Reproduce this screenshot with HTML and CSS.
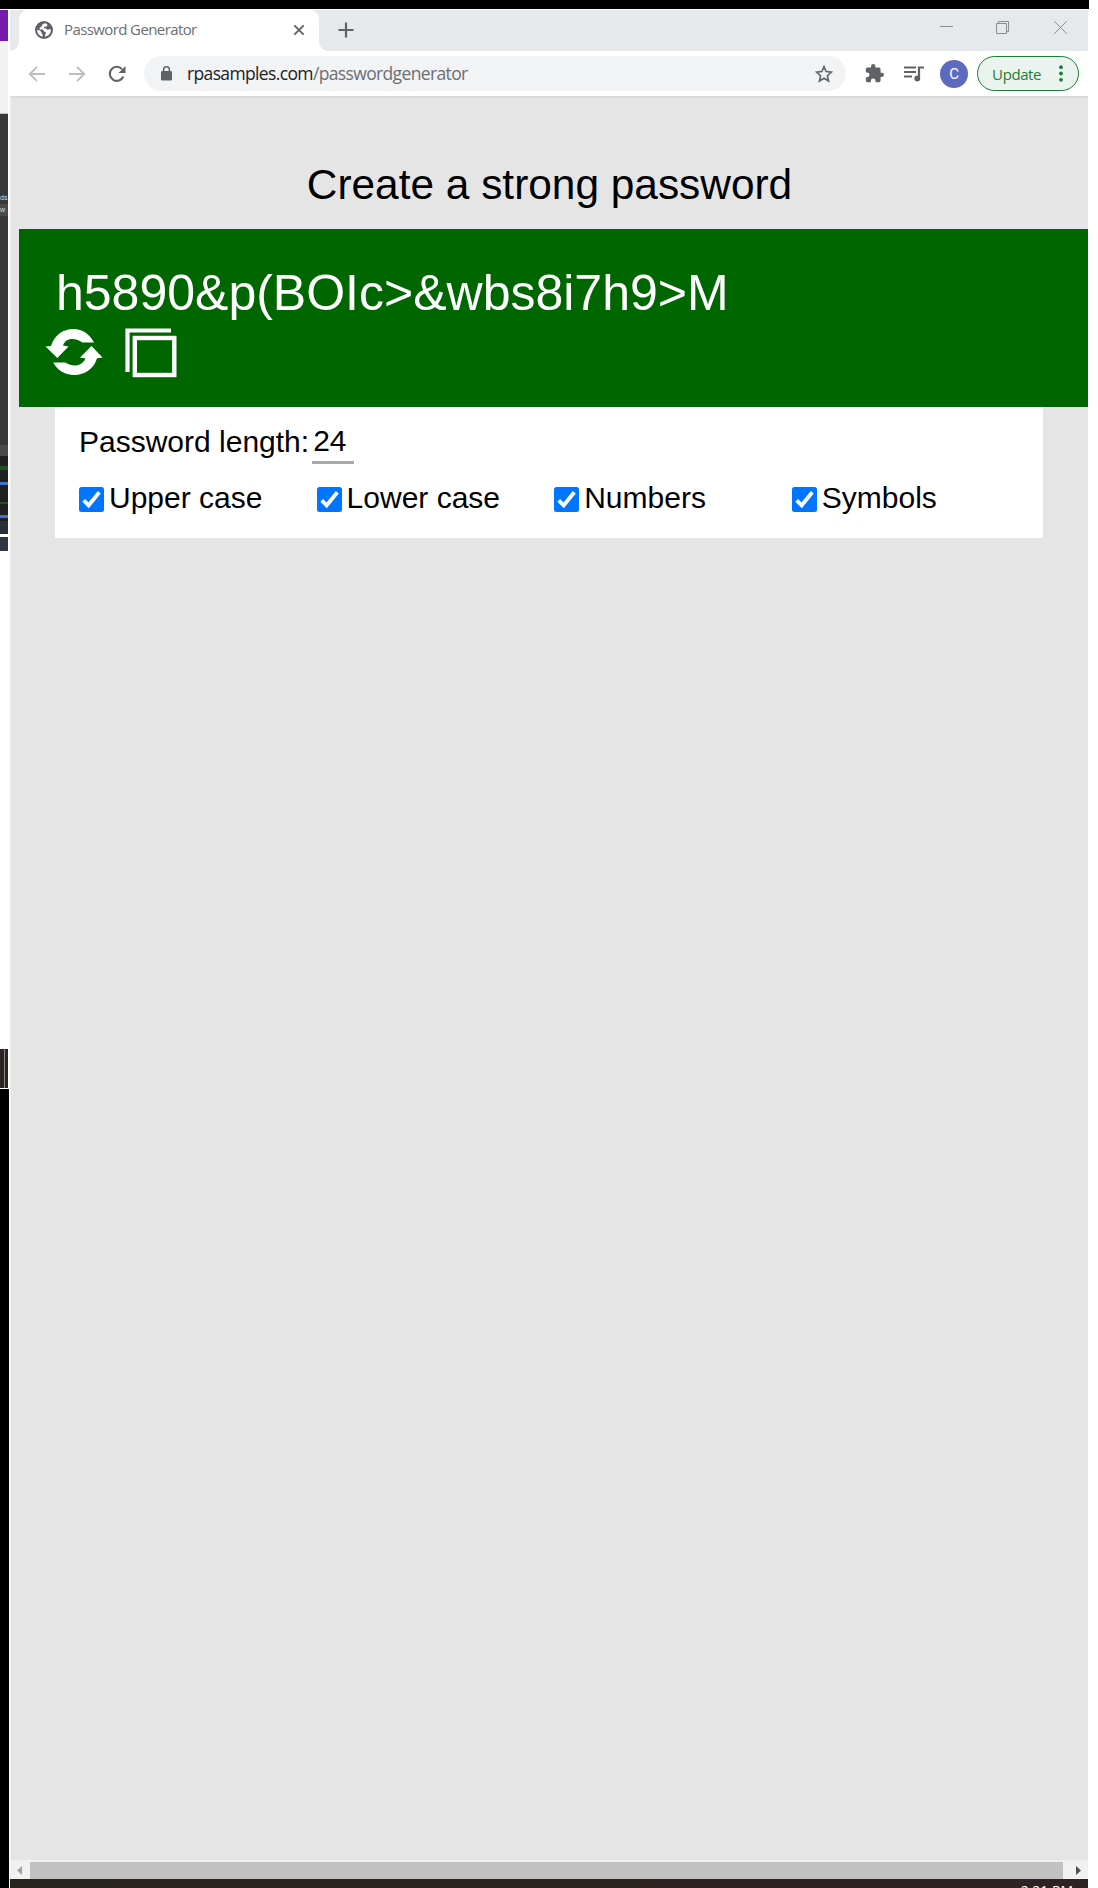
FILE: index.html
```html
<!DOCTYPE html>
<html lang="en">
<head>
<meta charset="utf-8">
<title>Password Generator</title>
<link rel="stylesheet" href="styles.css">
</head>
<body>
<div class="top-edge"></div>
<div class="desktop">
  <div class="behind">
    <div class="b-purple"></div>
    <div class="b-ribbon"></div>
    <div class="b-dark"></div>
    <div class="b-text">ds</div>
    <div class="b-row">w</div>
    <div class="b-dark2"></div>
    <div class="b-head"></div>
    <div class="b-tracks"></div>
    <div class="b-slate"></div>
    <div class="b-slate2"></div>
    <div class="b-white"></div>
    <div class="b-task"></div>
    <div class="b-black"></div>
  </div>
  <div class="window">
    <div class="tabstrip">
      <div class="strip-start"></div>
      <div class="tab">
        <svg class="globe" width="18" height="18" viewBox="0 0 18 18"><circle cx="9" cy="9" r="9" fill="#5f6368"/><path d="M10.5 2.2c-1.300.2-2.300.6-3.400 1.500 0 1-.2 1.800-1.200 2.200-.9.400-1.500 1-1.300 2 .2.700.9.800 1.800.7 1.200 0 2.400.2 2.600 1.400.2.900.9 1.100 1.900 1.200-.1 1.700-1 2.600-1 4.500 3.500-.5 6-3.400 6-6.900-.8-.6-1.400-.6-2.300-.2-.8.400-1.500.400-1.900-.4-.4-.8-1.200-1-2.100-.8-.7.100-.9-.5-.5-1.100.5-.6 1.300-.6 2.100-.7.900-.2 1.200-1 1.100-1.900-.1-.6-.6-1.200-1.800-1.500z" fill="#fff"/><path d="M2.300 8.700c1.700.3 3.300 1.200 4 2.300.6 1 .2 1.900 1.200 2.500.4.300.3 1.400-.2 2.100C4.300 14.900 2 12.300 2.300 8.700z" fill="#fff"/></svg>
        <span class="tab-title">Password Generator</span>
        <svg class="tab-close" width="12" height="12" viewBox="0 0 12 12"><path d="M1.300 1.300l9.400 9.400M10.700 1.300l-9.400 9.400" stroke="#5f6368" stroke-width="1.900"/></svg>
      </div>
      <div class="strip-rest">
        <svg width="16" height="16" viewBox="0 0 16 16"><path d="M8 .5v15M.5 8h15" stroke="#5f6368" stroke-width="2.200"/></svg>
        <div class="controls">
          <svg width="13" height="13" viewBox="0 0 13 13"><path d="M0 5.500h13" stroke="#8b8e90"/></svg>
          <svg width="13" height="13" viewBox="0 0 13 13"><path d="M.5 2.500h10v10H.5zM2.500 2.500v-2h10v10h-2" fill="none" stroke="#8b8e90"/></svg>
          <svg width="13" height="13" viewBox="0 0 13 13"><path d="M.3.3l12.400 12.400M12.700.3L.3 12.700" stroke="#8b8e90"/></svg>
        </div>
      </div>
    </div>
    <div class="toolbar">
      <svg class="nav" width="18" height="16" viewBox="0 0 18 16"><path d="M17 8H2M9 .8L1.800 8 9 15.200" fill="none" stroke="#bbbdbf" stroke-width="1.900"/></svg>
      <svg class="nav" width="18" height="16" viewBox="0 0 18 16"><path d="M1 8h15M9 .8L16.200 8 9 15.200" fill="none" stroke="#bbbdbf" stroke-width="1.900"/></svg>
      <svg class="nav" width="18" height="18" viewBox="0 0 18 18"><path d="M15.300 11.500A7 7 0 1 1 14 4.100" fill="none" stroke="#5f6368" stroke-width="2.100"/><path d="M17.500 1v7h-7z" fill="#5f6368"/></svg>
      <div class="omnibox">
        <svg class="lock" width="11" height="15" viewBox="0 0 11 15"><rect y="5" width="11" height="9.500" rx="1.200" fill="#5f6368"/><path d="M2.600 6V3.700a2.900 2.900 0 0 1 5.800 0V6" fill="none" stroke="#5f6368" stroke-width="1.500"/></svg>
        <span class="url"><span class="host">rpasamples.com</span>/passwordgenerator</span>
        <svg class="star" width="18" height="18" viewBox="0 0 18 18"><path d="M9 1.600l2.100 5 5.400.5-4.100 3.600 1.200 5.300L9 13.200 4.400 16l1.200-5.300-4.100-3.600 5.400-.5z" fill="none" stroke="#5f6368" stroke-width="1.600"/></svg>
      </div>
      <svg class="puzzle" width="19" height="19" viewBox="1 1 22 22"><path d="M20.500 11H19V7c0-1.100-.9-2-2-2h-4V3.500a2.500 2.500 0 0 0-5 0V5H4c-1.100 0-2 .9-2 2v3.800h1.500a2.700 2.700 0 0 1 0 5.400H2V20c0 1.100.9 2 2 2h3.800v-1.500a2.700 2.700 0 0 1 5.400 0V22H17c1.100 0 2-.9 2-2v-4h1.500a2.500 2.500 0 0 0 0-5z" fill="#5f6368"/></svg>
      <svg class="media" width="20" height="16" viewBox="0 0 20 16"><path d="M0 1.500h12M0 6h12M0 10.500h8" stroke="#5f6368" stroke-width="2"/><path d="M15 12.500V1.500h5" fill="none" stroke="#5f6368" stroke-width="2.200"/><circle cx="13.300" cy="12.500" r="2.900" fill="#5f6368"/></svg>
      <div class="avatar">C</div>
      <div class="update"><span>Update</span><svg width="4" height="17" viewBox="0 0 4 17"><g fill="#188038"><circle cx="2" cy="2.200" r="1.900"/><circle cx="2" cy="8.500" r="1.900"/><circle cx="2" cy="14.800" r="1.900"/></g></svg></div>
    </div>
    <main class="page">
      <h1>Create a strong password</h1>
      <section class="result">
        <div class="password">h5890&amp;p(BOIc&gt;&amp;wbs8i7h9&gt;M</div>
        <div class="actions">
          <svg width="58" height="48" viewBox="0 0 58 48"><g fill="#fff"><path d="M.5 18.500l5.500-.6C9.500 7.500 17.500 1 28.500 1 37.500 1 44.500 6 49 14.500H37.500C29 9 20.500 10 18 17.500l5.500 1L12.300 30z"/><path d="M57.500 29.500l-5.500.7C49 40.500 40 47 29.300 47 19.500 47 12 42 8.300 34.500h12C28 39.500 37 38.500 40.500 30.500l-5.500-1L46.500 18z"/></g></svg>
          <svg width="52" height="50" viewBox="0 0 52 50"><path d="M46 2.500H2.500V44" fill="none" stroke="#fff" stroke-width="4.200"/><rect x="9.800" y="10" width="39.500" height="37" fill="none" stroke="#fff" stroke-width="4.400"/></svg>
        </div>
      </section>
      <section class="options">
        <div class="length"><span>Password length:</span><span class="value">24</span></div>
        <div class="checks">
          <div class="check"><svg width="25" height="25" viewBox="0 0 25 25"><rect width="25" height="25" rx="2.500" fill="#0075ff"/><path d="M4.700 13.300l5 5L20.300 5.300" fill="none" stroke="#fff" stroke-width="3.800"/></svg>Upper case</div>
          <div class="check"><svg width="25" height="25" viewBox="0 0 25 25"><rect width="25" height="25" rx="2.500" fill="#0075ff"/><path d="M4.700 13.300l5 5L20.300 5.300" fill="none" stroke="#fff" stroke-width="3.800"/></svg>Lower case</div>
          <div class="check"><svg width="25" height="25" viewBox="0 0 25 25"><rect width="25" height="25" rx="2.500" fill="#0075ff"/><path d="M4.700 13.300l5 5L20.300 5.300" fill="none" stroke="#fff" stroke-width="3.800"/></svg>Numbers</div>
          <div class="check"><svg width="25" height="25" viewBox="0 0 25 25"><rect width="25" height="25" rx="2.500" fill="#0075ff"/><path d="M4.700 13.300l5 5L20.300 5.300" fill="none" stroke="#fff" stroke-width="3.800"/></svg>Symbols</div>
        </div>
      </section>
    </main>
    <div class="scrollbar">
      <svg width="20" height="19" viewBox="0 0 20 19"><path d="M7 10.500L12 6v9z" fill="#a3a3a3"/></svg>
      <div class="thumb"></div>
      <svg width="25" height="19" viewBox="0 0 25 19"><path d="M18 10.500L13 6v9z" fill="#505050"/></svg>
    </div>
    <div class="taskbar"><span>2:21 PM</span></div>
  </div>
</div>
</body>
</html>
```
FILE: styles.css
```css
* { box-sizing: border-box; }
body {
  margin: 0;
  width: 1098px;
  height: 1888px;
  overflow: hidden;
  background: #fff;
  font-family: "Liberation Sans", Arial, sans-serif;
}
svg { display: block; flex: none; }
.top-edge { width: 1089px; height: 9px; background: #000; }
.desktop { display: flex; padding-top: 1px; height: 1879px; }

/* sliver of the windows lying behind the browser */
.behind { width: 10px; display: flex; flex-direction: column; flex: none; }
.behind > div { width: 8px; flex: none; overflow: hidden; font-size: 7px; color: #ddd; }
.b-purple { height: 31px; background: #7719aa; }
.b-ribbon { height: 73px; background: #f3f2f1; border-bottom: 1px solid #c0c0c0; }
.b-dark { height: 80px; background: #393939; }
.b-text { height: 10px; line-height: 8px; background: #393939; }
.b-row { height: 12px; line-height: 11px; background: #4a4a4a; }
.b-dark2 { height: 229px; background: #393939; }
.b-head { height: 11px; background: #4a4a4a; }
.b-tracks {
  height: 65px;
  background: linear-gradient(#202020 0 10px, #205226 10px 14px, #202020 14px 26px, #3b78cf 26px 29px, #202020 29px 46px, #205226 46px 48px, #202020 48px 59px, #3e70dd 59px 62px, #202020 62px);
}
.b-slate { height: 13px; background: #28303a; }
.b-slate2 { height: 17px; background: #2f3842; border-top: 3px solid #fff; }
.b-white { height: 498px; }
.b-task { height: 39px; background: linear-gradient(90deg, #2c2222 4px, #8d8583 4px 5px, #2c2222 5px); }
.behind .b-black { width: 9px; height: 799px; margin-top: 1px; background: #000; }

.window { width: 1078px; display: flex; flex-direction: column; }

.tabstrip { height: 41px; display: flex; }
.strip-start { width: 9px; background: #e7eaed; border-bottom-right-radius: 9px; }
.tab {
  width: 300px;
  display: flex;
  align-items: center;
  padding: 0 14px 1px 16px;
  background: radial-gradient(circle at 10px 10px, #fff 10px, #e5e9ec 10.5px) 0 0 / 10px 10px no-repeat,
    radial-gradient(circle at 0 10px, #fff 10px, #e5e9ec 10.5px) 100% 0 / 10px 10px no-repeat, #fff;
}
.tab-title {
  margin-left: 11px;
  padding-bottom: 2px;
  flex: 1;
  font: 15px "Open Sans", "Noto Sans", sans-serif;
  letter-spacing: -0.6px;
  color: #6b6e72;
  white-space: nowrap;
}
.strip-rest {
  flex: 1;
  display: flex;
  align-items: center;
  justify-content: space-between;
  padding: 0 21px 1px 19px;
  background: #e5e9ec;
  border-bottom-left-radius: 9px;
}
.controls { display: flex; gap: 43px; padding-bottom: 5px; }
.controls svg:last-child { margin-left: 2px; }

.toolbar {
  height: 47px;
  display: flex;
  align-items: center;
  padding: 0 9px 0 18px;
  background: #fff;
  border-bottom: 2px solid #d9dbdf;
}
.nav { margin-right: 22px; }
.nav:nth-child(3) { margin-right: 18px; }
.omnibox {
  width: 703px;
  height: 35px;
  border-radius: 18px;
  background: #f1f3f4;
  display: flex;
  align-items: center;
  padding: 0 13px 0 17px;
}
.url {
  flex: 1;
  margin-left: 15px;
  padding-bottom: 1px;
  font: 17.500px "Open Sans", "Noto Sans", sans-serif;
  letter-spacing: -0.640px;
  color: #6b6e72;
}
.host { color: #202124; }
.puzzle { margin-left: 19px; }
.media { margin-left: 20px; }
.avatar {
  width: 28px;
  height: 28px;
  margin-left: 16px;
  border-radius: 50%;
  background: #5c6bc0;
  color: #fff;
  font: 15px/29px Roboto, sans-serif;
  text-align: center;
}
.update {
  width: 102px;
  height: 35px;
  margin-left: 9px;
  padding: 0 15px 0 14px;
  border: 1.500px solid #188038;
  border-radius: 18px;
  background: #ebf3ee;
  display: flex;
  align-items: center;
  justify-content: space-between;
  color: #188038;
  font: 15px "Open Sans", "Noto Sans", sans-serif;
  letter-spacing: -0.4px;
}

.page { height: 1762px; background: #e5e5e5; border-left: 1px solid #eee; }
h1 {
  margin: 0;
  height: 131px;
  padding-top: 63px;
  font-size: 42.400px;
  font-weight: 400;
  line-height: 48px;
  text-align: center;
  color: #000;
}
.result { height: 178px; margin-left: 8px; padding: 36px 0 0 26px; background: #060; }
.password { padding-left: 11px; color: #fff; font-size: 50px; line-height: 56px; white-space: nowrap; }
.actions { display: flex; gap: 22px; padding-top: 7px; }
.options { width: 988px; height: 131px; margin-left: 44px; padding: 17px 0 0 24px; background: #fff; font-size: 30px; color: #000; }
.length { display: flex; height: 40px; line-height: 36px; }
.value { width: 42px; margin-left: 3px; padding-left: 1px; line-height: 34px; border-bottom: 3px solid #a9a9a9; }
.checks { display: grid; grid-template-columns: repeat(4, 237.600px); padding-top: 18px; }
.check { display: flex; align-items: center; gap: 5px; height: 31px; line-height: 28px; }
.check svg { margin-top: 4px; }

.scrollbar { height: 19px; display: flex; background: #f1f1f1; }
.thumb { flex: 1; margin-top: 2px; background: #c1c1c1; }
.taskbar { height: 9px; overflow: hidden; background: linear-gradient(90deg, #28241f, #2e2222); text-align: right; padding: 5px 15px 0 0; color: #fff; font: 14px/14px "Open Sans", sans-serif; }
```
